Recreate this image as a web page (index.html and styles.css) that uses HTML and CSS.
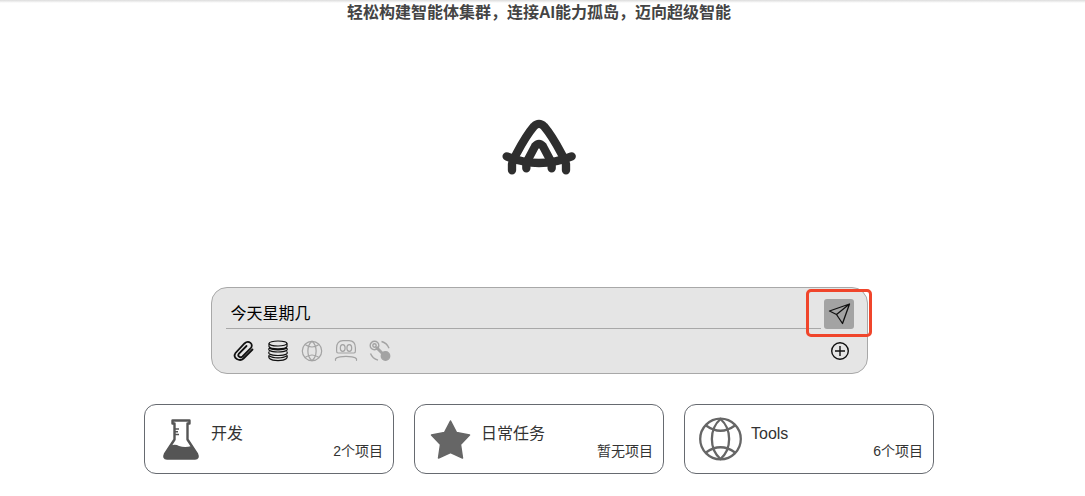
FILE: index.html
```html
<!DOCTYPE html>
<html lang="zh-CN">
<head>
<meta charset="utf-8">
<meta name="viewport" content="width=device-width, initial-scale=1">
<title>智能体集群</title>
<link rel="stylesheet" href="styles.css">
</head>
<body>
<main class="page">
  <h1 class="slogan">轻松构建智能体集群，连接AI能力孤岛，迈向超级智能</h1>

  <svg class="logo" viewBox="30 21 240 180" fill="none" stroke="#2e2e2e" stroke-width="25" stroke-linecap="round" stroke-linejoin="round" aria-hidden="true">
    <path d="M69 181V163C71 152 76 143 82 132C98 102 117 70 135 49Q150 34 165 49C183 70 202 102 218 132C224 143 229 152 231 163V181"/>
    <path d="M53 139Q100 159 150 159T248 139"/>
    <path d="M112 175V158L138 109Q150 95 162 109L188 158V175"/>
  </svg>

  <form class="composer">
    <div class="composer-row">
      <input class="prompt" type="text" value="今天星期几" aria-label="输入问题">
      <button class="send" type="button" aria-label="发送">
        <svg viewBox="0 0 30 30" width="30" height="30" fill="none" stroke="#111" stroke-width="1.3" stroke-linejoin="round"><path d="M25.500 5L5.500 12L12.500 15.500L18.500 24.500ZM25.500 5L12.500 15.500L14.500 18.500"/></svg>
      </button>
    </div>
    <div class="toolbar">
      <button class="tool" type="button" aria-label="附件">
        <svg viewBox="0 0 24 24" fill="none" stroke="currentColor" stroke-width="1.8" stroke-linecap="round"><path d="M20.500 10.500L11.500 19.500C8 23 -0.200 19.200 3.500 14L12.500 4.500C16.500 0.500 22.500 5.200 18.500 9.500L10.500 17.500C8 19.500 5 17 7 14.500L14.500 7"/></svg>
      </button>
      <button class="tool" type="button" aria-label="知识库">
        <svg viewBox="0 0 24 24" fill="none" stroke="currentColor" stroke-width="1.2"><ellipse cx="12" cy="4.500" rx="9" ry="2.500"/><path d="M3 4.500V7.500C4 10.500 20 10.500 21 7.500V4.500M3.500 9C2.500 9.500 2.500 11 3.500 11.500C7 13.500 17 13.500 20.500 11.500C21.500 11 21.500 9.500 20.500 9M3.500 9.300C7 11.300 17 11.300 20.500 9.300M3.500 12.500C2.500 13 2.500 14.500 3.500 15C7 17 17 17 20.500 15C21.500 14.500 21.500 13 20.500 12.500M3.500 16C2.500 16.500 2.500 18.500 3.500 19.500C7 22.300 17 22.300 20.500 19.500C21.500 18.500 21.500 16.500 20.500 16M3.500 17C7 19.500 17 19.500 20.500 17"/></svg>
      </button>
      <button class="tool tool-off" type="button" aria-label="联网">
        <svg viewBox="0 0 24 24" fill="none" stroke="currentColor" stroke-width="1.2"><circle cx="12" cy="12" r="9.7"/><path d="M12 2.3C6.5 7 6.5 17 12 21.7C17.5 17 17.5 7 12 2.3ZM5 5.5Q12 10.5 19 5.5M5 18.5Q12 13.5 19 18.5"/></svg>
      </button>
      <button class="tool tool-off" type="button" aria-label="智能体">
        <svg viewBox="0 0 24 24" fill="none" stroke="currentColor" stroke-width="1.2" stroke-linecap="round"><path d="M4 14Q2.6 14 2.6 12V9Q2.6 1.7 9 1.7H15Q21.4 1.7 21.4 9V12Q21.4 14 20 14ZM1.500 21.300V20Q2 18.500 6 17.800Q12 16.800 18 17.800Q22 18.500 22.500 20V21.300"/><ellipse cx="8.7" cy="9" rx="2.4" ry="3.3"/><ellipse cx="15.3" cy="9" rx="2.4" ry="3.3"/></svg>
      </button>
      <button class="tool tool-off" type="button" aria-label="工作流">
        <svg viewBox="0 0 24 24" fill="none" stroke="currentColor" stroke-width="1.4"><circle cx="6.500" cy="6.500" r="4.300"/><circle cx="6.500" cy="6.500" r="1.700"/><path d="M8 8L16 16" stroke-width="3"/><circle cx="17.5" cy="17" r="4.200" fill="currentColor"/><path d="M13.500 2.500Q19 4 21 9.300M2.500 14.500Q4.500 19.500 10 21.200"/></svg>
      </button>
      <button class="tool tool-add" type="button" aria-label="添加">
        <svg viewBox="0 0 24 24" fill="none" stroke="currentColor" stroke-width="1.4"><circle cx="12" cy="12" r="8.3"/><path d="M12 7V17M7 12H17"/></svg>
      </button>
    </div>
  </form>

  <section class="cards">
    <a class="card" href="#dev">
      <svg class="card-icon" viewBox="0 0 44 44" aria-hidden="true"><path d="M13.500 3.500H30.500V6.500H28.500V22.500L38 37Q40 41.5 36 41.5H8Q4 41.5 6 37L15.500 22.500V6.500H13.500Z" fill="#fff" stroke="#555" stroke-width="2.4" stroke-linejoin="round"/><path d="M11 29Q16 26.5 20 29Q26 31 32.5 29L38.5 38Q39.5 41.5 36 41.5H8Q4.5 41.5 5.5 38Z" fill="#555"/><path d="M16 12H20M16 14.8H19M16 17.5H20" stroke="#555" stroke-width="1.4"/></svg>
      <span class="card-name">开发</span>
      <span class="card-count">2个项目</span>
    </a>
    <a class="card" href="#daily">
      <svg class="card-icon" viewBox="0 0 44 44" aria-hidden="true"><path d="M21.500 4L27.500 15.500L40.500 18L31.500 27.500L33.500 41L21.500 35.500L9.500 41L11.500 27.500L2.500 18L15.500 15.500Z" fill="#666" stroke="#666" stroke-width="1.5" stroke-linejoin="round"/></svg>
      <span class="card-name">日常任务</span>
      <span class="card-count">暂无项目</span>
    </a>
    <a class="card" href="#tools">
      <svg class="card-icon" viewBox="0 0 44 44" fill="none" stroke="#666" stroke-width="2.3" aria-hidden="true"><circle cx="21.500" cy="22" r="20.3"/><path d="M21.500 2C10 12 10 32 21.500 42C33 32 33 12 21.500 2ZM7 8.500Q21.500 19 36 8.500M7 35.500Q21.500 25 36 35.500"/></svg>
      <span class="card-name">Tools</span>
      <span class="card-count">6个项目</span>
    </a>
  </section>
</main>
</body>
</html>
```
FILE: styles.css
```css
* {
  box-sizing: border-box;
}

body {
  margin: 0;
  background: #fff;
  color: #333;
  font-family: "Liberation Sans", "Noto Sans CJK SC", sans-serif;
  font-size: 16px;
  line-height: 24px;
}

.page {
  display: flex;
  flex-direction: column;
  align-items: center;
  padding: 1px 7px 22px 0;
  background: linear-gradient(#dcdcdc, #fff) top / 100% 3px no-repeat;
}

.slogan {
  margin: 0;
  color: #444;
  font-size: 16px;
  font-weight: 700;
}

.logo {
  width: 80px;
  height: 60px;
  margin: 92px 0 110px;
}

.composer {
  width: 657px;
  max-width: 100%;
  padding: 11px 13px 10px 14px;
  border: 1px solid #a8a8a8;
  border-radius: 16px;
  background: #e5e5e5;
}

.composer-row {
  display: flex;
  gap: 3px;
}

.prompt {
  flex: 1;
  min-width: 0;
  height: 30px;
  padding: 0 5px 4px;
  border: 0;
  border-bottom: 1px solid #a8a8a8;
  background: none;
  color: #000;
  font: inherit;
  outline: 0;
}

.send {
  position: relative;
  width: 30px;
  height: 30px;
  padding: 0;
  border: 0;
  border-radius: 3px;
  background: #a3a3a3;
}

.send svg {
  display: block;
}

.send::after {
  content: "";
  position: absolute;
  inset: -10px -18px -8px;
  border: 3px solid #f0452b;
  border-radius: 5px;
}

.toolbar {
  display: flex;
  gap: 10px;
  margin-top: 10px;
  padding-left: 6px;
}

.tool {
  width: 24px;
  height: 24px;
  padding: 0;
  border: 0;
  background: none;
  color: #111;
}

.tool svg {
  display: block;
  width: 24px;
  height: 24px;
}

.tool-off {
  color: #a3a3a3;
}

.tool-add {
  margin: 0 2px 0 auto;
}

.cards {
  display: flex;
  flex-wrap: wrap;
  justify-content: center;
  gap: 20px;
  margin-top: 30px;
}

.card {
  display: grid;
  grid-template-columns: 44px 1fr;
  grid-template-rows: 24px 20px;
  column-gap: 8px;
  width: 250px;
  padding: 12px 10px 12px 14px;
  border: 1px solid #666a70;
  border-radius: 12px;
  color: #333;
  text-decoration: none;
}

.card-icon {
  grid-row: 1 / 3;
  width: 44px;
  height: 44px;
}

.card-name {
  padding-top: 5px;
}

.card-count {
  justify-self: end;
  font-size: 14px;
  line-height: 20px;
}
```
